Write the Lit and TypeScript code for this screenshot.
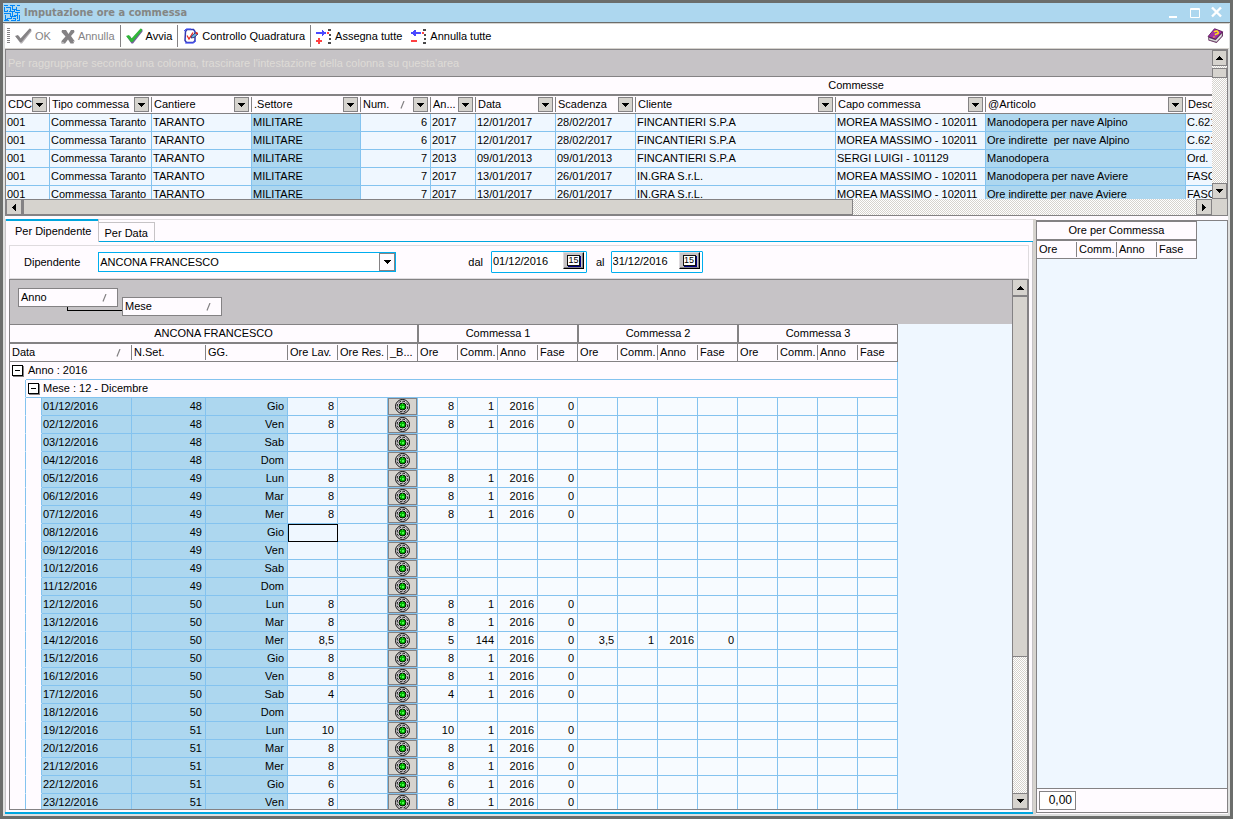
import { LitElement, html, css, svg, nothing } from "lit";
import { customElement } from "lit/decorators.js";
import { classMap } from "lit/directives/class-map.js";

type Col = { label: string; width: number; sort?: boolean; tone?: boolean; num?: boolean };

const JOB_COLS: Col[] = [
  { label: "CDC", width: 44 },
  { label: "Tipo commessa", width: 102 },
  { label: "Cantiere", width: 100 },
  { label: ".Settore", width: 109, tone: true },
  { label: "Num.", width: 70, sort: true, num: true },
  { label: "An...", width: 45 },
  { label: "Data", width: 80 },
  { label: "Scadenza", width: 80 },
  { label: "Cliente", width: 200 },
  { label: "Capo commessa", width: 150 },
  { label: "@Articolo", width: 200, tone: true },
  { label: "Descrizione", width: 521 },
];

const JOBS: string[][] = [
  ["001", "Commessa Taranto", "TARANTO", "MILITARE", "6", "2017", "12/01/2017", "28/02/2017", "FINCANTIERI S.P.A", "MOREA MASSIMO - 102011", "Manodopera per nave Alpino", "C.621"],
  ["001", "Commessa Taranto", "TARANTO", "MILITARE", "6", "2017", "12/01/2017", "28/02/2017", "FINCANTIERI S.P.A", "MOREA MASSIMO - 102011", "Ore indirette  per nave Alpino", "C.621"],
  ["001", "Commessa Taranto", "TARANTO", "MILITARE", "7", "2013", "09/01/2013", "09/01/2013", "FINCANTIERI S.P.A", "SERGI LUIGI - 101129", "Manodopera", "Ord."],
  ["001", "Commessa Taranto", "TARANTO", "MILITARE", "7", "2017", "13/01/2017", "26/01/2017", "IN.GRA S.r.L.", "MOREA MASSIMO - 102011", "Manodopera per nave Aviere", "FASC"],
  ["001", "Commessa Taranto", "TARANTO", "MILITARE", "7", "2017", "13/01/2017", "26/01/2017", "IN.GRA S.r.L.", "MOREA MASSIMO - 102011", "Ore indirette per nave Aviere", "FASC"],
];

const DAY_NAMES = ["Dom", "Lun", "Mar", "Mer", "Gio", "Ven", "Sab"];

// Hours worked for each day of December 2016, with the jobs they are booked on.
const HOURS: Record<number, { total: string; first: string[]; second?: string[] }> = {};
for (const d of [1, 2, 5, 6, 7, 12, 13, 15, 16, 20, 21, 23]) {
  HOURS[d] = { total: "8", first: ["8", "1", "2016", "0"] };
}
HOURS[14] = { total: "8,5", first: ["5", "144", "2016", "0"], second: ["3,5", "1", "2016", "0"] };
HOURS[17] = { total: "4", first: ["4", "1", "2016", "0"] };
HOURS[19] = { total: "10", first: ["10", "1", "2016", "0"] };
HOURS[22] = { total: "6", first: ["6", "1", "2016", "0"] };

const DAYS = Array.from({ length: 23 }, (_, i) => {
  const day = i + 1;
  const entry = HOURS[day];
  const none = ["", "", "", ""];
  return {
    day,
    date: `${String(day).padStart(2, "0")}/12/2016`,
    week: String(48 + Math.floor((i + 3) / 7)),
    name: DAY_NAMES[(i + 4) % 7],
    total: entry?.total ?? "",
    cells: [...(entry?.first ?? none), ...(entry?.second ?? none), ...none],
  };
});

const SUB = ["Ore", "Comm.", "Anno", "Fase"];

const icon = (w: number, h: number, body: unknown) =>
  html`<svg width=${w} height=${h} viewBox="0 0 ${w} ${h}" aria-hidden="true">${body}</svg>`;

const arrow = (dir: "up" | "down" | "left" | "right") => {
  const d = {
    up: "M3 0h1v1h1v1h1v1h1v1H0V3h1V2h1V1h1z",
    down: "M0 0h7v1H6v1H5v1H4v1H3V3H2V2H1V1H0z",
    left: "M3 0h1v7H3V6H2V5H1V4H0V3h1V2h1V1h1z",
    right: "M0 0h1v1h1v1h1v1h1v1H3v1H2v1H1v1H0z",
  }[dir];
  return dir === "up" || dir === "down"
    ? icon(7, 4, svg`<path d=${d} fill="#000" shape-rendering="crispEdges"/>`)
    : icon(4, 7, svg`<path d=${d} fill="#000" shape-rendering="crispEdges"/>`);
};

const sortMark = html`<span class="sort">${icon(5, 8, svg`<path d="M4 0L1 7.5" stroke="#848284" stroke-width="1.2"/>`)}</span>`;

const logo = icon(16, 16, svg`<g fill="none" stroke="#0086f7" stroke-width="1" shape-rendering="crispEdges">
  <path d="M0 .5h4M6 .5h5M13 .5h3M.5 2v4M2 2.5h4v3M8.5 0v4h3M12.5 2v3h3M0 6.5h3v-2M5 6.5h5v-2M13.5 7v3M11 7.5h5M0 8.5h6v3M1.5 10v4h2M8.5 7v4h3M3 13.5h4v-3M10 10.5h3v3M0 15.5h5M7 15.5h4v-3M15.5 10v5M13 15.5h3M7.5 12v2M9 13.5h3"/></g>`);

const tick = (face: string, edge: string) => icon(17, 16, svg`
  <path d="M1 9l3-1 2.500 3.500L15 1l1.500.5v2L7 15.500H5.500z" fill=${edge}/>
  <path d="M0 8l3-1 2.500 3.500L14.500 0.500l1.500.5v1.500L6.500 14H5z" fill=${face}/>`);

const cross = icon(14, 15, svg`
  <path d="M1 1h4l2.500 4L10 1h3l.5 2-3.500 4 3.500 5-1 2.500H9.500L7 10.500 4 14.500H.5V12l4-4.500L.5 3z" fill="#848284"/>
  <path d="M12 13l1.500-1M3 14l-2-.5" stroke="#c6c3c6"/>`);

const checkDoc = icon(16, 16, svg`
  <path d="M2.500 3.500L4 1.500h6.500l1.500 2v9L10.500 14.500h-7l-1.500-2z" fill="#fff" stroke="#3138b5" stroke-width="1.500"/>
  <path d="M1 3l2-2h5M2 15h8l3-2" fill="none" stroke="#4a59ff"/>
  <path d="M4 7.500l2 3.500 4-6.500" fill="none" stroke="#e72821" stroke-width="1.300"/>
  <path d="M8 10l1-2.500L13 4.500l2 1.500-4 3.500z" fill="#6bb6e7" stroke="#182063" stroke-width=".8"/>
  <path d="M13 4.500l1.500 1.500" stroke="#e72821" stroke-width="2"/>`);

const assign = (plus: boolean) => icon(16, 15, svg`<g shape-rendering="crispEdges">
  ${plus
    ? svg`<path d="M0 3h6V1h1v1h1v1h2v2H8v1H7v1H6V5H0z" fill="#4a49ff"/><path d="M2 9h2v2h2v2H4v2H2v-2H0v-2h2z" fill="#ff4142"/>`
    : svg`<path d="M10 3H5V1H3v1H2v1H0v2h2v1h1v1h2V5h5z" fill="#4a49ff"/><path d="M0 11h6v2H0z" fill="#ff4142"/>`}
  <path d="M11 3h2v2h-2z" fill="#ff4142"/>
  <path d="M12 0h3v2h-3zM13 5h2v2h-2zM13 9h2v2h-2zM12 13h3v2h-3z" fill="#4a494a"/></g>`);

const book = icon(17, 16, svg`
  <path d="M1 9.500L8 1l8 3v4L9.500 15 1.500 12.500z" fill="#6b2063"/>
  <path d="M1.500 9.500l7 2.500L15 5v3L9.500 14 2 11.800z" fill="#e7e3e7" stroke="#6b6d6b" stroke-width=".6"/>
  <path d="M1 8.500L7.500 .7l8 3-7 7.500z" fill="#a530a5" stroke="#521852" stroke-width=".8"/>
  <path d="M7 4q3-2 4 0t-2 2l-1 1M6.500 8.800l1 .3" fill="none" stroke="#ffe710" stroke-width="1.500"/>`);

const lamp = icon(15, 15, svg`
  <circle cx="7.500" cy="7.500" r="7" fill="#e7e3e7" stroke="#000" stroke-width="1"/>
  <circle cx="7.500" cy="7.500" r="5.300" fill="none" stroke="#101010" stroke-width="1" stroke-dasharray="3 1"/>
  <circle cx="7.500" cy="7.500" r="3.500" fill="#00b200" stroke="#000" stroke-width="1"/>
  <path d="M7 4.500h1v1H7zM5 7h1v1H5zM7 7h2v2H7z" fill="#4aff4a"/>`);

const filterButton = (label: string) =>
  html`<button class="drop" aria-label="Filtro ${label}">${arrow("down")}</button>`;

const toggle = (label: string) => html`<button class="toggle" aria-label=${label}></button>`;

@customElement("app-root")
export class AppRoot extends LitElement {
  static styles = css`
    :host {
      --line: #848284;
      --grid: #84c3ef;
      --paper: #fffbff;
      --face: #d6d3ce;
      --blue: #add7ef;
      --pale: #eff7ff;
      --accent: #00a6de;
      display: flex;
      flex-direction: column;
      box-sizing: border-box;
      height: 100vh;
      border: 3px solid #6b6d6b;
      background: #dedfde;
      color: #000;
      font: 11px/17px "Liberation Sans", Arial, sans-serif;
      overflow: hidden;
    }
    * { box-sizing: border-box; }
    svg { display: block; flex: none; }
    button, input, select, output { font: inherit; color: inherit; margin: 0; padding: 0; border: 0; border-radius: 0; background: none; }
    table { border-collapse: separate; border-spacing: 0; table-layout: fixed; }
    th, td { font-weight: normal; text-align: left; padding: 0; white-space: pre; overflow: hidden; }

    .title { display: flex; align-items: center; gap: 4px; height: 20px; flex: none; padding: 0 8px 0 1px; background: var(--blue); border-bottom: 1px solid #6b6d6b; }
    .title h1 { flex: 1; margin: 0; font: bold 11px/18px "DejaVu Sans Condensed", "DejaVu Sans", sans-serif; color: #848684; }
    .title .box { display: flex; gap: 10px; }
    .title .box button { display: flex; width: 11px; height: 13px; }

    .tools { display: flex; align-items: center; height: 26px; flex: none; margin: 0 1px 0 2px; padding: 0 1px 0 2px; background: #fff; border-top: 1px solid var(--face); border-bottom: 1px solid var(--face); }
    .tools button { display: flex; align-items: center; gap: 3px; height: 22px; padding: 0 5px; white-space: nowrap; }
    .tools button:disabled { color: #848284; }
    .tools .bar { width: 1px; height: 22px; background: var(--line); }
    .tools .grip { width: 3px; height: 16px; background: repeating-linear-gradient(#848284 0 1px, #fff 1px 2px); }
    .tools .fill { flex: 1; }
    .tools .tight { padding: 0 4px; }

    .jobs { display: grid; grid-template-columns: minmax(0, 1fr) 16px; grid-template-rows: 149px 17px; height: 167px; flex: none; margin: 0 2px; border-top: 1px solid var(--line); }
    .jobs .view { border-left: 1px solid var(--line); overflow: hidden; background: var(--pale); }
    .jobs .area { height: 26px; padding: 4px 2px; background: #c6c3c6; color: #dedbd6; line-height: 18px; white-space: nowrap; }
    .jobs .corner { background: var(--face); border: solid var(--line); border-width: 0 1px 1px 0; }

    .band th { height: 20px; line-height: 17px; text-align: center; background: var(--paper); border: solid var(--line); border-width: 1px 1px 2px 0; }
    .band .join { border-left-width: 1px; }
    .heads th { height: 18px; background: linear-gradient(var(--line), var(--line)) right center / 1px 15px no-repeat var(--paper); border-bottom: 1px solid var(--line); }
    .heads th.full { background-size: 1px 18px; }
    .head { display: flex; align-items: center; height: 17px; padding: 0 3px 0 2px; }
    .head .name { flex: 1; }
    .sort { padding: 0 8px; }
    .drop { display: grid; place-items: center; flex: none; width: 15px; height: 15px; background: var(--face); border: 1px solid var(--line); }
    .rows td { height: 18px; border: solid var(--grid); border-width: 0 1px 1px 0; background: var(--pale); padding: 0 3px 0 1px; }
    .rows .tone { background: var(--blue); }
    .rows .num { text-align: right; }

    .scroll { display: flex; background: repeating-conic-gradient(var(--face) 0 25%, #fff 0 50%) 0 0 / 2px 2px; }
    .scroll.v { flex-direction: column; border-right: 1px solid var(--line); }
    .scroll button { display: grid; place-items: center; flex: none; width: 16px; height: 16px; background: var(--face); border: 1px solid var(--line); }
    .scroll .thumb { background: var(--face); border: 1px solid var(--line); }
    .scroll.v button { width: 100%; }
    .jobs .scroll.h { border: solid var(--line); border-width: 0 0 1px 1px; }
    .jobs .scroll.h .thumb { flex: 0 1 833px; border-left-width: 2px; }
    .jobs .scroll.h .rest { flex: 1 1 344px; }
    .jobs .scroll.v .thumb { height: 10px; margin-top: 2px; flex: none; }
    .scroll.v .rest { flex: 1; }

    .work { display: flex; flex: 1; min-height: 0; margin: 0 2px 2px; padding-top: 3px; background: var(--paper); }
    .left { display: flex; flex-direction: column; flex: 1; min-width: 0; }
    .tabs { display: flex; align-items: flex-end; height: 23px; flex: none; border-top: 1px solid #dedbde; }
    .tabs button { background: var(--paper); height: 20px; padding: 2px 6px 0 5px; border: solid #c6c3c6; border-width: 1px 1px 0 0; border-bottom: 1px solid var(--accent); }
    .tabs .on { height: 23px; margin-top: -1px; padding: 2px 7px 0 9px; border: solid #c6c3c6; border-width: 0 1px 0 1px; box-shadow: inset 0 2px var(--accent); }
    .tabs .rest { flex: 1; height: 1px; background: var(--accent); }
    .page { display: flex; flex-direction: column; flex: 1; min-height: 0; padding: 3px 3px 2px 3px; border: solid #c6c3c6; border-width: 0 1px 0 1px; }
    .under { height: 2px; flex: none; background: var(--accent); }

    .filter { display: flex; align-items: center; height: 34px; flex: none; padding: 0 14px; border: 1px solid #dedbde; background: var(--paper); }
    .filter .combo { position: relative; display: flex; width: 298px; height: 20px; margin: 0 72px 0 18px; background: #fff; border: 1px solid #00aeef; }
    .filter select { appearance: none; flex: 1; line-height: 16px; padding: 0 18px 1px 1px; outline: none; }
    .filter .combo span { position: absolute; right: 0; top: 0; display: grid; place-items: center; width: 16px; height: 18px; background: var(--paper); border: 1px solid var(--line); pointer-events: none; }
    .filter .date { display: flex; width: 96px; height: 22px; margin: 0 9px 0 8px; background: #fff; border: 1px solid #00aeef; border-radius: 1px; }
    .filter .date.end { width: 92px; margin-left: 6px; }
    .filter .date input { flex: 1; min-width: 0; height: 18px; padding-left: 1px; outline: none; }
    .filter .date button { display: grid; place-items: center; width: 21px; height: 17px; margin-right: 2px; background: #c6c3c6; border: 1px solid #dedbde; border-right-color: #000; border-bottom-color: #000; box-shadow: inset -1px -1px #848284; }
    .filter .cal { width: 13px; height: 11px; background: #fff; border: 1px solid #101010; box-shadow: 1px 1px #000084; font-size: 9px; line-height: 9px; text-align: center; }

    .sheet { display: flex; flex: 1; min-height: 0; border: 1px solid var(--line); }
    .sheet .body { flex: 1; min-width: 0; overflow: hidden; background: var(--pale); }
    .sheet .scroll { width: 16px; border-left: 1px solid var(--line); }
    .sheet .scroll button { border-width: 0 0 1px; }
    .sheet .scroll .thumb { flex: 0 1 362px; border-width: 1px 0; }
    .sheet .scroll .rest { flex: 1 1 136px; }
    .sheet .scroll .last { border-top-width: 1px; }
    .groups { display: flex; align-items: flex-start; gap: 4px; height: 44px; padding: 8px; background: #c6c3c6; }
    .chip { position: relative; display: flex; align-items: center; width: 100px; height: 19px; padding: 0 2px; background: var(--paper); border: 1px solid var(--line); }
    .chip .name { flex: 1; text-align: left; }
    .chip.second { margin-top: 9px; }
    .chip.second::before { content: ""; position: absolute; right: 99px; top: 9px; width: 54px; height: 3px; border: solid #000; border-width: 0 0 1px 1px; }
    .groups + table { width: 888px; }
    .rows .group { background: var(--paper); padding-left: 2px; }
    .rows .gutter { background: var(--paper); border-bottom-color: var(--paper); padding: 0; }
    .rows .pad { border-right: 0; border-bottom-color: var(--paper); }
    .label { display: flex; align-items: center; gap: 4px; }
    .toggle { width: 11px; height: 11px; border: 1px solid #000; background: linear-gradient(#000, #000) center / 5px 1px no-repeat #fff; box-shadow: 1px 1px #848284; }
    .rows .soft { background: #f7fbff; text-align: right; }
    .rows .act { padding: 0; }
    .rows .act button { display: grid; place-items: center; width: 100%; height: 17px; background: var(--face); border: 1px solid var(--line); }
    .rows .cursor { outline: 1px solid #000; outline-offset: -1px; }

    .gap { width: 3px; flex: none; background: var(--face); }
    .side { display: flex; flex-direction: column; width: 192px; flex: none; margin: 1px 0; border: 1px solid var(--line); background: var(--pale); }
    .side table { width: 160px; }
    .side .void { flex: 1; }
    .side .foot { height: 24px; padding: 2px; background: var(--paper); border-top: 1px solid var(--line); }
    .side output { display: block; width: 37px; height: 19px; padding-right: 3px; text-align: right; font-size: 12px; background: #fff; border: 1px solid var(--line); }
  `;

  private jobGrid() {
    return html`<section class="jobs">
      <div class="view">
        <div class="area">Per raggruppare secondo una colonna, trascinare l'intestazione della colonna su questa'area</div>
        <table style="width:${JOB_COLS.reduce((s, c) => s + c.width, 0)}px">
          <colgroup>${JOB_COLS.map((c) => html`<col style="width:${c.width}px">`)}</colgroup>
          <thead>
            <tr class="band"><th colspan="12">Commesse</th></tr>
            <tr class="heads">${JOB_COLS.map((c) => html`<th scope="col"><div class="head"><span class="name">${c.label}</span>${c.sort ? sortMark : nothing}${filterButton(c.label)}</div></th>`)}</tr>
          </thead>
          <tbody class="rows">
            ${JOBS.map((r) => html`<tr>${r.map((v, i) => html`<td class=${classMap({ tone: !!JOB_COLS[i].tone, num: !!JOB_COLS[i].num })}>${v}</td>`)}</tr>`)}
          </tbody>
        </table>
      </div>
      <div class="scroll v">
        <button aria-label="Su">${arrow("up")}</button><div class="thumb"></div><div class="rest"></div><button aria-label="Giù">${arrow("down")}</button>
      </div>
      <div class="scroll h">
        <button aria-label="Sinistra">${arrow("left")}</button><div class="thumb"></div><div class="rest"></div><button aria-label="Destra">${arrow("right")}</button>
      </div>
      <div class="corner"></div>
    </section>`;
  }

  private dayGrid() {
    const widths = [16, 16, 90, 74, 82, 50, 50, 30, ...Array(12).fill(40)];
    return html`<table>
      <colgroup>${widths.map((w) => html`<col style="width:${w}px">`)}</colgroup>
      <thead>
        <tr class="band">
          <th colspan="8">ANCONA FRANCESCO</th>
          ${[1, 2, 3].map((n) => html`<th class="join" colspan="4">Commessa ${n}</th>`)}
        </tr>
        <tr class="heads">
          <th scope="col" colspan="3"><div class="head"><span class="name">Data</span>${sortMark}</div></th>
          ${["N.Set.", "GG.", "Ore Lav.", "Ore Res.", "_B..."].map((t) => html`<th scope="col" class=${t === "_B..." ? "full" : ""}><div class="head">${t}</div></th>`)}
          ${[0, 1, 2].map(() => SUB.map((t, i) => html`<th scope="col" class=${i === 3 ? "full" : ""}><div class="head">${t}</div></th>`))}
        </tr>
      </thead>
      <tbody class="rows">
        <tr>
          <td class="group pad"><div class="label">${toggle("Chiudi anno")}</div></td>
          <td class="group" colspan="19">Anno : 2016</td>
        </tr>
        <tr>
          <td class="gutter"></td>
          <td class="group" colspan="19"><div class="label">${toggle("Chiudi mese")}Mese : 12 - Dicembre</div></td>
        </tr>
        ${DAYS.map((d) => html`<tr>
          <td class="gutter"></td><td class="gutter"></td>
          <td class="tone">${d.date}</td>
          <td class="tone num">${d.week}</td>
          <td class="tone num">${d.name}</td>
          <td class=${classMap({ num: true, cursor: d.day === 8 })}>${d.total}</td>
          <td></td>
          <td class="act"><button aria-label="Dettaglio ${d.date}">${lamp}</button></td>
          ${d.cells.map((v) => html`<td class="soft">${v}</td>`)}
        </tr>`)}
      </tbody>
    </table>`;
  }

  render() {
    return html`
      <header class="title">
        ${logo}
        <h1>Imputazione ore a commessa</h1>
        <div class="box">
          <button aria-label="Riduci">${icon(11, 13, svg`<path d="M0 10h8v2H0z" fill="#fff"/>`)}</button>
          <button aria-label="Ingrandisci">${icon(11, 13, svg`<path d="M.5 2.500h9v9h-9zM0 3.500h10" fill="none" stroke="#fff"/>`)}</button>
          <button aria-label="Chiudi">${icon(11, 13, svg`<path d="M1 1.500l9 9M10 1.500l-9 9" stroke="#fff" stroke-width="2.400"/>`)}</button>
        </div>
      </header>

      <nav class="tools" aria-label="Comandi">
        <span class="grip"></span>
        <button disabled>${tick("#848284", "#b5b2b5")}OK</button>
        <button disabled>${cross}Annulla</button>
        <span class="bar"></span>
        <button>${tick("#31b639", "#73619c")}Avvia</button>
        <span class="bar"></span>
        <button>${checkDoc}Controllo Quadratura</button>
        <span class="bar"></span>
        <button>${assign(true)}Assegna tutte</button>
        <button class="tight">${assign(false)}Annulla tutte</button>
        <span class="fill"></span>
        <button class="tight" aria-label="Guida">${book}</button>
      </nav>

      ${this.jobGrid()}

      <main class="work">
        <section class="left">
          <div class="tabs" role="tablist">
            <button class="on" role="tab" aria-selected="true">Per Dipendente</button>
            <button role="tab" aria-selected="false">Per Data</button>
            <span class="rest"></span>
          </div>
          <div class="page">
            <form class="filter">
              <label for="who">Dipendente</label>
              <div class="combo">
                <select id="who"><option>ANCONA FRANCESCO</option></select>
                <span>${arrow("down")}</span>
              </div>
              <label for="from">dal</label>
              <div class="date"><input id="from" value="01/12/2016"><button type="button" aria-label="Calendario dal"><span class="cal">15</span></button></div>
              <label for="to">al</label>
              <div class="date end"><input id="to" value="31/12/2016"><button type="button" aria-label="Calendario al"><span class="cal">15</span></button></div>
            </form>
            <div class="sheet">
              <div class="body">
                <div class="groups">
                  <button class="chip"><span class="name">Anno</span>${sortMark}</button>
                  <button class="chip second"><span class="name">Mese</span>${sortMark}</button>
                </div>
                ${this.dayGrid()}
              </div>
              <div class="scroll v">
                <button aria-label="Su">${arrow("up")}</button><div class="thumb"></div><div class="rest"></div><button class="last" aria-label="Giù">${arrow("down")}</button>
              </div>
            </div>
          </div>
          <div class="under"></div>
        </section>
        <div class="gap"></div>
        <aside class="side">
          <table>
            <thead>
              <tr class="band"><th colspan="4">Ore per Commessa</th></tr>
              <tr class="heads">${SUB.map((t, i) => html`<th scope="col" class=${i === 3 ? "full" : ""}><div class="head">${t}</div></th>`)}</tr>
            </thead>
          </table>
          <div class="void"></div>
          <div class="foot"><output aria-label="Totale ore">0,00</output></div>
        </aside>
      </main>
    `;
  }
}
